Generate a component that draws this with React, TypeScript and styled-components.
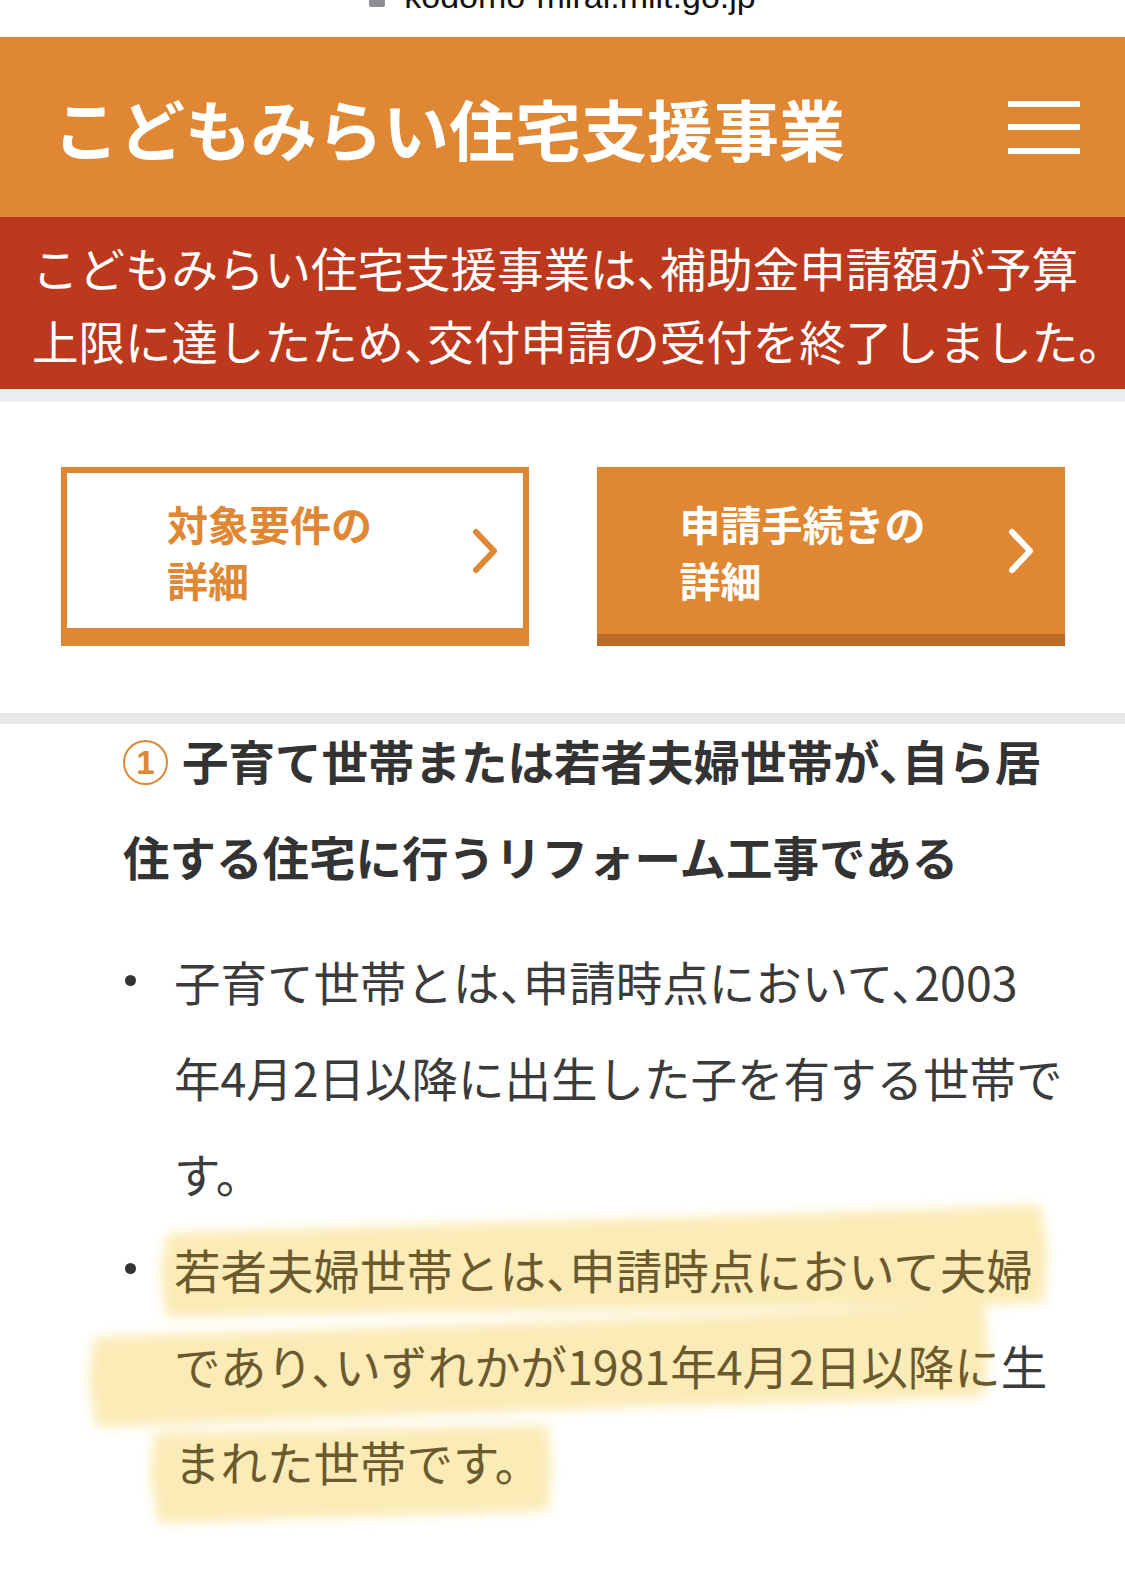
import { FC } from "react";
import styled, { createGlobalStyle, css } from "styled-components";

const orange = "#e08733";
const orangeDeep = "#b96b27";
const red = "#bd391d";
const ink = "#333333";
const markInk = "#6b5a2e";

const GlobalStyle = createGlobalStyle`
  html, body {
    margin: 0;
    padding: 0;
    background: #fff;
  }
  body {
    font-family: "Noto Sans CJK JP", "Noto Sans", sans-serif;
    font-feature-settings: "halt";
    -webkit-font-smoothing: antialiased;
  }
`;

const Page = styled.div`
  width: 1125px;
  min-height: 1585px;
  background: #fff;
`;

const UrlBar = styled.div`
  height: 37px;
  overflow: hidden;
  display: flex;
  justify-content: center;
`;

const UrlRow = styled.div`
  display: flex;
  gap: 19px;
  height: 34px;
  margin-top: -21px;
`;

const Lock = styled.span`
  align-self: flex-end;
  width: 16px;
  height: 18px;
  margin-bottom: 6px;
  border-radius: 2px;
  background: #8e8e93;
`;

const UrlText = styled.span`
  font-family: "Liberation Sans", Arial, sans-serif;
  font-size: 34px;
  line-height: 34px;
  color: #111;
`;

const Header = styled.header`
  height: 180px;
  box-sizing: border-box;
  padding: 0 45px 0 53px;
  display: flex;
  align-items: center;
  justify-content: space-between;
  background: ${orange};
`;

const SiteTitle = styled.h1`
  margin: 0;
  color: #fff;
  font-size: 66px;
  font-weight: 700;
  line-height: 1;
  white-space: nowrap;
`;

const MenuButton = styled.button`
  width: 72px;
  height: 53px;
  padding: 0;
  border: 0;
  background: none;
  display: flex;
  flex-direction: column;
  justify-content: space-between;
`;

const MenuLine = styled.span`
  display: block;
  height: 6px;
  background: #fff;
`;

const Notice = styled.p`
  margin: 0;
  padding: 13px 0 13px 32px;
  background: ${red};
  color: #fff;
  font-size: 46.5px;
  line-height: 73px;
  white-space: nowrap;
`;

const ButtonSection = styled.nav`
  display: flex;
  justify-content: space-between;
  padding: 65px 60px 67px 61px;
  border-top: 13px solid #e9edef;
  border-bottom: 11px solid #e8e8e8;
`;

const NavButton = styled.a<{ $filled?: boolean }>`
  box-sizing: border-box;
  width: 468px;
  height: 179px;
  display: flex;
  align-items: center;
  text-decoration: none;
  font-size: 41px;
  font-weight: 700;
  line-height: 56px;
  ${({ $filled }) =>
    $filled
      ? css`
          padding-right: 31px;
          background: ${orange};
          color: #fff;
          border-bottom: 12px solid ${orangeDeep};
        `
      : css`
          padding-right: 25px;
          background: #fff;
          color: ${orange};
          border: 6px solid ${orange};
          border-bottom-width: 18px;
        `}
`;

const Label = styled.span`
  flex: 1;
  display: flex;
  justify-content: center;
`;

const LabelText = styled.span`
  display: block;
  white-space: nowrap;
`;

const Chevron: FC = () => (
  <svg width="26" height="46" viewBox="0 0 26 46" fill="none">
    <polyline
      points="4,4 22,23 4,42"
      stroke="currentColor"
      strokeWidth="6"
      strokeLinecap="round"
      strokeLinejoin="round"
    />
  </svg>
);

const Content = styled.section`
  padding: 0 40px 76px 123px;
`;

const Heading = styled.h2`
  margin: -12px 0 0;
  color: ${ink};
  font-size: 46.5px;
  font-weight: 700;
  line-height: 96px;
  white-space: nowrap;
`;

const CircledNumber = styled.span`
  display: inline-flex;
  align-items: center;
  justify-content: center;
  box-sizing: border-box;
  width: 45px;
  height: 45px;
  margin-right: 14px;
  border: 2px solid ${orange};
  border-radius: 50%;
  color: ${orange};
  font-family: "Liberation Sans", Arial, sans-serif;
  font-size: 33px;
  font-weight: 700;
  line-height: 1;
  vertical-align: middle;
  transform: translateY(-5px);
`;

const List = styled.ul`
  list-style: none;
  margin: 29px 0 0;
  padding: 0;
`;

const Item = styled.li`
  position: relative;
  isolation: isolate;
  padding-left: 51px;
  color: #3b3b3b;
  font-size: 46.5px;
  line-height: 96px;
  white-space: nowrap;

  &::before {
    content: "";
    position: absolute;
    left: 2px;
    top: 42px;
    width: 11px;
    height: 11px;
    border-radius: 50%;
    background: ${ink};
  }
`;

const ItemText = styled.span`
  position: relative;
  z-index: 1;
`;

const Marked = styled.span`
  color: ${markInk};
`;

/* hand-drawn marker strokes laid under the second bullet */
const MarkerStrokes = styled.svg`
  position: absolute;
  left: -123px;
  top: -40px;
  z-index: 0;
  pointer-events: none;
`;

const strokes = [
  "168,52 420,44 760,34 1040,24 1048,70 1044,122 700,128 380,132 166,136 160,90",
  "94,156 400,146 740,134 984,122 988,170 984,216 640,226 300,238 96,246 88,200",
  "154,252 360,248 548,244 552,290 548,330 350,336 158,342 150,296",
];

const App: FC = () => (
  <Page>
    <GlobalStyle />
    <UrlBar>
      <UrlRow>
        <Lock />
        <UrlText>kodomo-mirai.mlit.go.jp</UrlText>
      </UrlRow>
    </UrlBar>

    <Header>
      <SiteTitle>こどもみらい住宅支援事業</SiteTitle>
      <MenuButton aria-label="menu">
        <MenuLine />
        <MenuLine />
        <MenuLine />
      </MenuButton>
    </Header>

    <Notice>
      こどもみらい住宅支援事業は、補助金申請額が予算
      <br />
      上限に達したため、交付申請の受付を終了しました。
    </Notice>

    <ButtonSection>
      <NavButton href="#">
        <Label>
          <LabelText>
            対象要件の
            <br />
            詳細
          </LabelText>
        </Label>
        <Chevron />
      </NavButton>
      <NavButton href="#" $filled>
        <Label>
          <LabelText>
            申請手続きの
            <br />
            詳細
          </LabelText>
        </Label>
        <Chevron />
      </NavButton>
    </ButtonSection>

    <Content>
      <Heading>
        <CircledNumber>1</CircledNumber>
        子育て世帯または若者夫婦世帯が、自ら居
        <br />
        住する住宅に行うリフォーム工事である
      </Heading>

      <List>
        <Item>
          <ItemText>
            子育て世帯とは、申請時点において、2003
            <br />
            年4月2日以降に出生した子を有する世帯で
            <br />
            す。
          </ItemText>
        </Item>
        <Item>
          <MarkerStrokes width="1125" height="380" viewBox="0 0 1125 380">
            <defs>
              <filter id="marker-blur" x="-5%" y="-20%" width="110%" height="140%">
                <feGaussianBlur stdDeviation="6" />
              </filter>
            </defs>
            <g fill="#fbebb6" filter="url(#marker-blur)">
              {strokes.map((p) => (
                <polygon key={p} points={p} />
              ))}
            </g>
          </MarkerStrokes>
          <ItemText>
            <Marked>若者夫婦世帯とは、申請時点において夫婦</Marked>
            <br />
            <Marked>であり、いずれかが1981年4月2日以降に</Marked>生
            <br />
            <Marked>まれた世帯です。</Marked>
          </ItemText>
        </Item>
      </List>
    </Content>
  </Page>
);

export default App;
